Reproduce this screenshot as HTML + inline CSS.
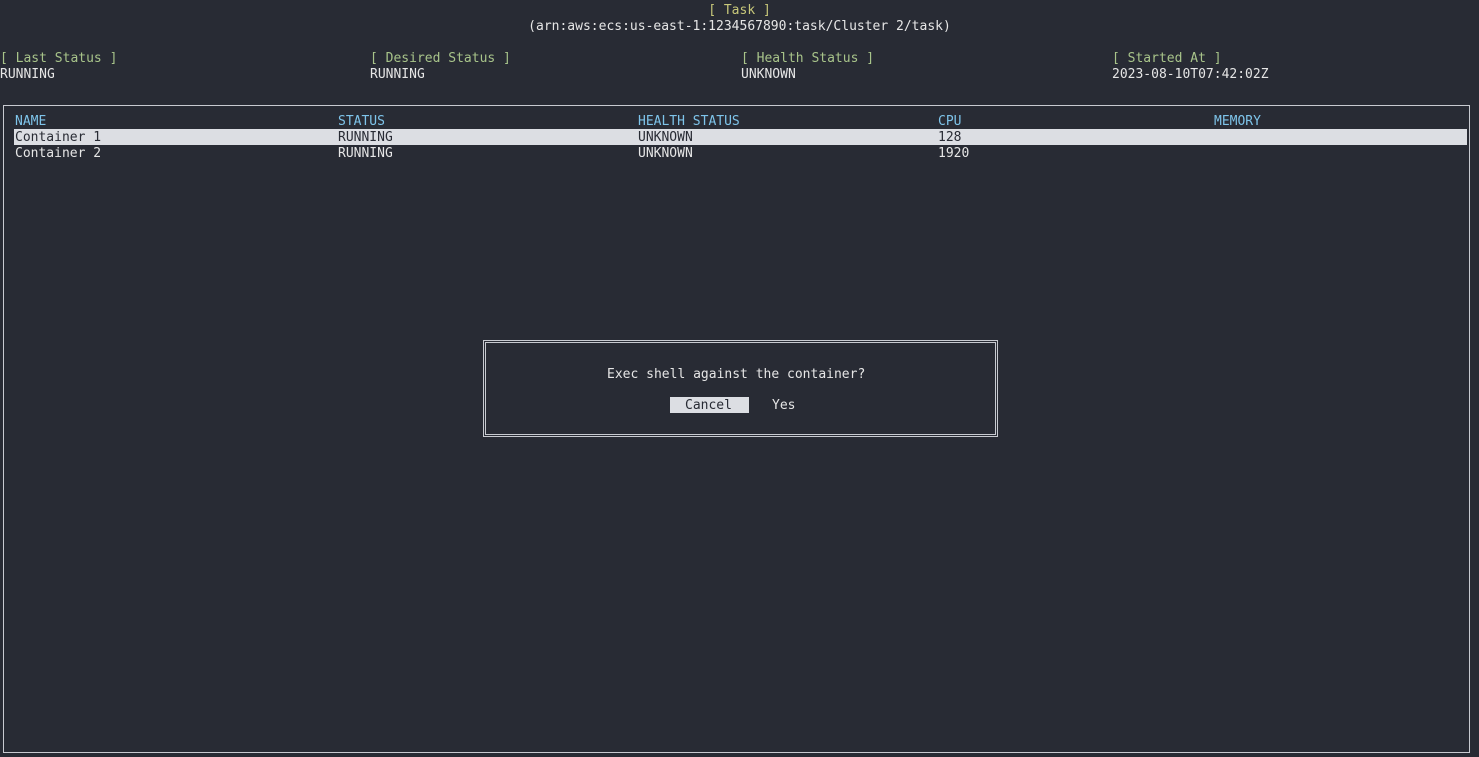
<!DOCTYPE html>
<html><head><style>
body{margin:0;width:1479px;height:757px;background:#282b34;font-family:"DejaVu Sans Mono","Liberation Mono",monospace;font-size:13px;color:#e6e6e6;position:relative;overflow:hidden}
.t{position:absolute;white-space:pre;line-height:16px;margin-top:1px}
.g{color:#a8c48a}
.b{color:#7ec4ea}
.hl{position:absolute;left:14px;top:129px;width:1453px;height:16px;background:#dcdee3}
</style></head><body>
<div class="t" style="left:0;width:1479px;text-align:center;top:2px;color:#c8c87a">[ Task ]</div>
<div class="t" style="left:0;width:1479px;text-align:center;top:18px">(arn:aws:ecs:us-east-1:1234567890:task/Cluster 2/task)</div>
<div class="t g" style="left:0;top:50px">[ Last Status ]</div>
<div class="t" style="left:0;top:66px">RUNNING</div>
<div class="t g" style="left:370px;top:50px">[ Desired Status ]</div>
<div class="t" style="left:370px;top:66px">RUNNING</div>
<div class="t g" style="left:741px;top:50px">[ Health Status ]</div>
<div class="t" style="left:741px;top:66px">UNKNOWN</div>
<div class="t g" style="left:1112px;top:50px">[ Started At ]</div>
<div class="t" style="left:1112px;top:66px">2023-08-10T07:42:02Z</div>
<div style="position:absolute;left:3px;top:105px;width:1465px;height:646px;border:1px solid #c8cad0"></div>
<div class="hl"></div>
<div class="t b" style="left:15px;top:113px">NAME</div>
<div class="t b" style="left:338px;top:113px">STATUS</div>
<div class="t b" style="left:638px;top:113px">HEALTH STATUS</div>
<div class="t b" style="left:938px;top:113px">CPU</div>
<div class="t b" style="left:1214px;top:113px">MEMORY</div>
<div class="t" style="left:15px;top:129px;color:#282b34">Container 1</div>
<div class="t" style="left:338px;top:129px;color:#282b34">RUNNING</div>
<div class="t" style="left:638px;top:129px;color:#282b34">UNKNOWN</div>
<div class="t" style="left:938px;top:129px;color:#282b34">128</div>
<div class="t" style="left:15px;top:145px">Container 2</div>
<div class="t" style="left:338px;top:145px">RUNNING</div>
<div class="t" style="left:638px;top:145px">UNKNOWN</div>
<div class="t" style="left:938px;top:145px">1920</div>
<div style="position:absolute;left:483px;top:340px;width:509px;height:91px;border:3px double #c8cad0;background:#282b34"></div>
<div class="t" style="left:607px;top:366px">Exec shell against the container?</div>
<div style="position:absolute;left:670px;top:397px;width:79px;height:16px;background:#dcdee3"></div>
<div class="t" style="left:685px;top:397px;color:#282b34">Cancel</div>
<div class="t" style="left:772px;top:397px">Yes</div>
</body></html>
